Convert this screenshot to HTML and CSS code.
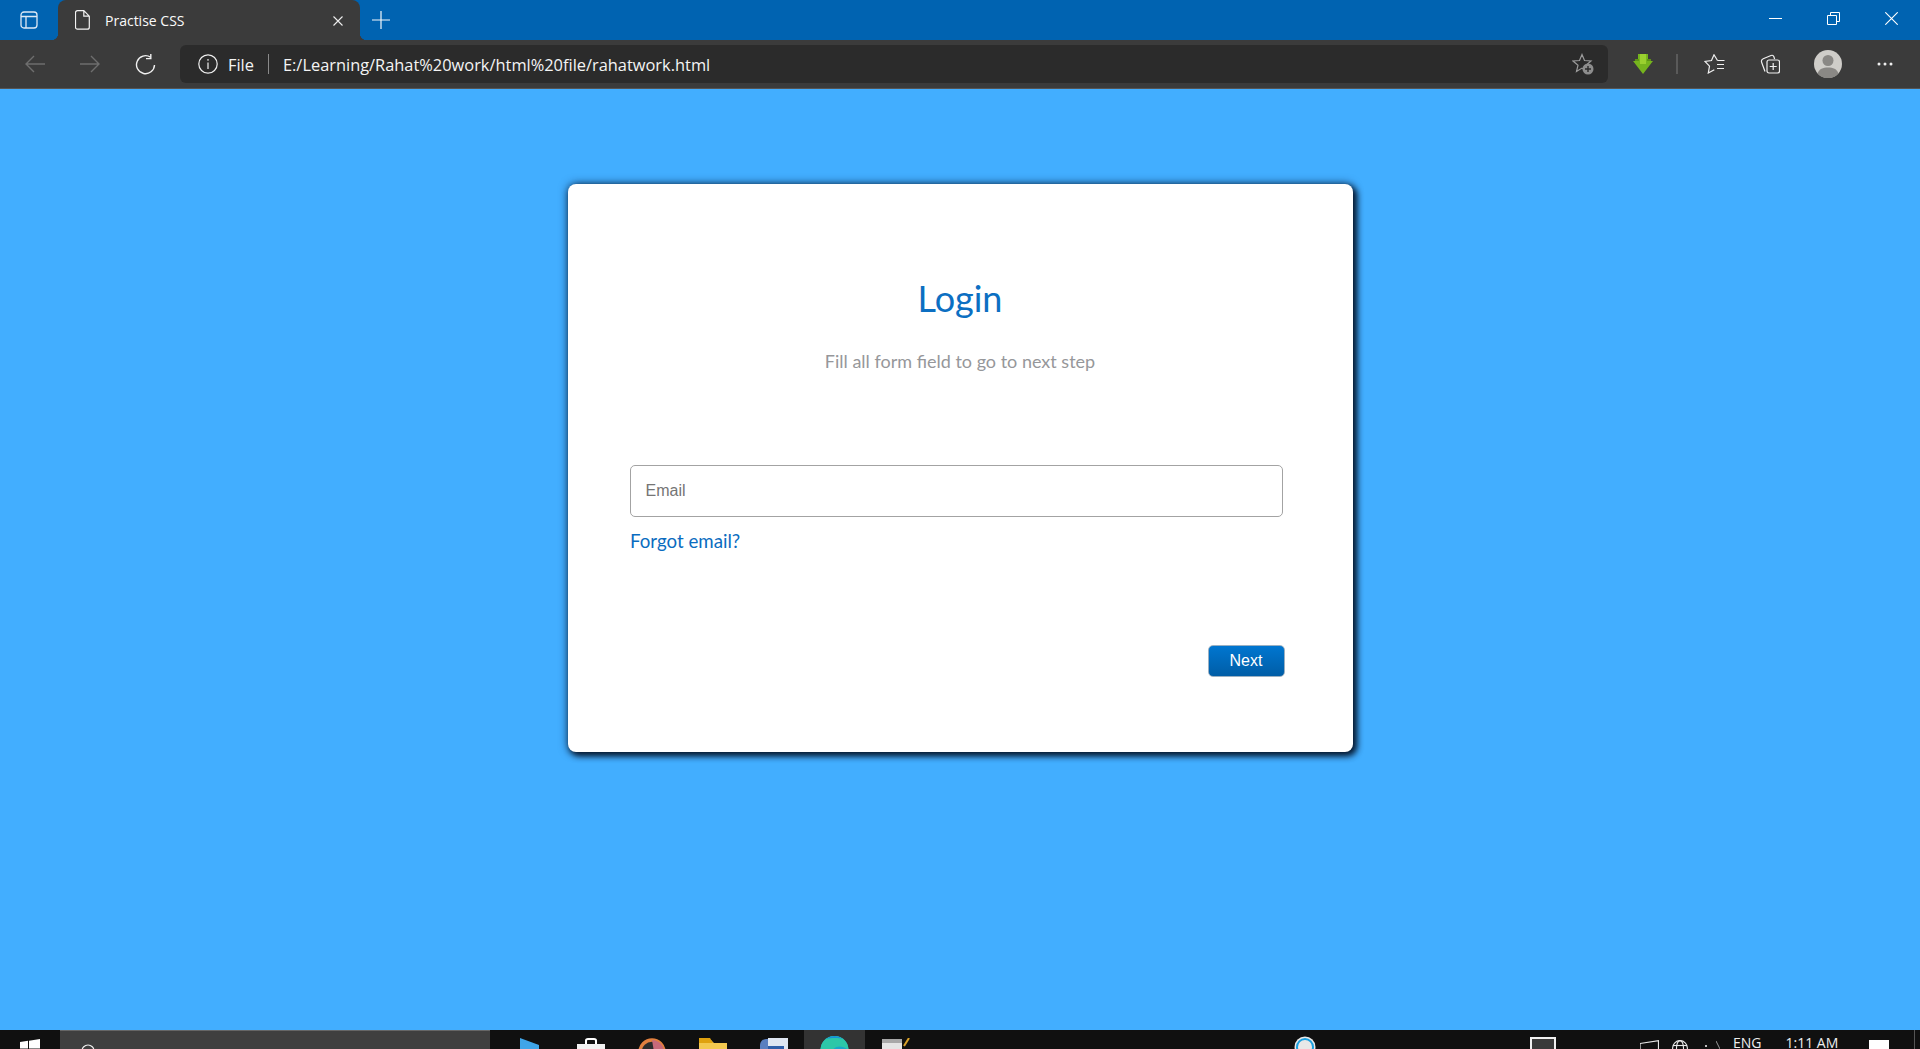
FILE: index.html
```html
<!DOCTYPE html>
<html lang="en">
<head>
  <meta charset="UTF-8" />
  <title>Practise CSS</title>
  <link rel="stylesheet" href="styles.css">
</head>
<body>
  <header class="tabstrip">
    <span class="sidebar-btn">
      <svg width="18" height="18" viewBox="0 0 18 18" fill="none" stroke="#dce9f5" stroke-width="1.3"><rect x="1" y="1" width="16" height="16" rx="3"/><path d="M1 5.500h16M6 5.500V17"/></svg>
    </span>
    <div class="tab">
      <svg width="15" height="20" viewBox="0 0 15 20" fill="none" stroke="#f2f2f2" stroke-width="1.2"><path d="M2.500 .7h6.300l5.500 5.500v11a2 2 0 0 1-2 2h-9.800a2 2 0 0 1-2-2v-14.500a2 2 0 0 1 2-2zM8.800 .7v5.500h5.500"/></svg>
      <span class="tab-title">Practise CSS</span>
      <svg class="tab-close" width="10" height="10" viewBox="0 0 10 10" stroke="#eee" stroke-width="1.1"><path d="M.5.5l9 9M9.500.5l-9 9"/></svg>
    </div>
    <svg class="new-tab" width="18" height="18" viewBox="0 0 18 18" stroke="#f4f8fb" stroke-width="1.2"><path d="M9 0v18M0 9h18"/></svg>
    <div class="window-btns">
      <svg width="13" height="13" viewBox="0 0 13 13" stroke="#fff"><path d="M0 6.500h13"/></svg>
      <svg width="13" height="13" viewBox="0 0 13 13" fill="none" stroke="#fff"><path d="M.5 3.500h9v9h-9zM3.500 3.500v-3h9v9h-3"/></svg>
      <svg width="13" height="13" viewBox="0 0 13 13" stroke="#fff" stroke-width="1.100"><path d="M.3.300l12.400 12.400M12.700.300L.3 12.700"/></svg>
    </div>
  </header>

  <nav class="toolbar">
    <span class="nav-btn">
      <svg width="20" height="18" viewBox="0 0 20 18" fill="none" stroke="#6e6e6e" stroke-width="1.400"><path d="M20 9H1M9 1L1 9l8 8"/></svg>
    </span>
    <span class="nav-btn">
      <svg width="20" height="18" viewBox="0 0 20 18" fill="none" stroke="#6e6e6e" stroke-width="1.400"><path d="M0 9h19M11 1l8 8-8 8"/></svg>
    </span>
    <span class="nav-btn">
      <svg width="21" height="21" viewBox="0 0 21 21" fill="none" stroke="#f0f0f0" stroke-width="1.400"><path d="M15.500 3.200A9 9 0 1 0 19.500 11"/><path d="M15.800 0v4.600h-4.800"/></svg>
    </span>
    <div class="address">
      <svg width="20" height="20" viewBox="0 0 20 20" fill="none" stroke="#eee" stroke-width="1.200"><circle cx="10" cy="10" r="9.200"/><path d="M10 8.500v6.500M10 5v1.800"/></svg>
      <span class="scheme">File</span>
      <span class="addr-sep"></span>
      <span class="url">E:/Learning/Rahat%20work/html%20file/rahatwork.html</span>
      <svg class="star-add" width="22" height="22" viewBox="0 0 22 22" fill="none"><path d="M10 1.500l2.500 6 6.500.500-5 4.200 1.500 6.300-5.500-3.400-5.500 3.400 1.500-6.300-5-4.200 6.500-.500z" stroke="#9a9a9a" stroke-width="1.200"/><circle cx="16" cy="16" r="5.500" fill="#8d8d8d"/><path d="M16 13v6M13 16h6" stroke="#2b2b2b" stroke-width="1.400"/></svg>
    </div>
    <div class="tool-icons">
      <svg class="tool-save" width="20" height="20" viewBox="0 0 20 20"><path d="M5 0h10v7h5L10 20 0 7h5z" fill="#76b41e"/><path d="M7 0h6v10H7z" fill="#9ad02f"/><path d="M2 5h4v2H2zM14 5h4v2h-4z" fill="#5d9415"/></svg>
      <span class="tool-sep"></span>
      <svg class="tool-fav" width="21" height="20" viewBox="0 0 21 20" fill="none" stroke="#f0f0f0" stroke-width="1.200"><path d="M13.500 6.500h7M13 10.500h7M13 14.500h7M13.500 6.500L10 .8 7.500 6.500l-6.500 1 4.500 4.700-1.200 6.800 6-3.300"/></svg>
      <svg class="tool-coll" width="20" height="20" viewBox="0 0 20 20" fill="none" stroke="#f0f0f0" stroke-width="1.200"><path d="M5 17.500L1.700 8.500c-.7-2 .3-3.300 1.500-3.800L11 1.500c1.500-.6 2.500 0 3 1.500l.6 2"/><rect x="7" y="6" width="12.500" height="13" rx="2"/><path d="M13.200 9v7M9.700 12.500h7"/></svg>
      <svg class="tool-avatar" width="28" height="28" viewBox="0 0 28 28"><circle cx="14" cy="14" r="14" fill="#cfcdc9"/><circle cx="14" cy="10.500" r="5.500" fill="#8a8885"/><path d="M3.500 23.500c1.500-4.500 5.500-6 10.500-6s9 1.500 10.500 6a14 14 0 0 1-21 0z" fill="#8a8885"/></svg>
      <svg class="tool-more" width="16" height="4" viewBox="0 0 16 4" fill="#eee"><circle cx="2" cy="2" r="1.500"/><circle cx="8" cy="2" r="1.500"/><circle cx="14" cy="2" r="1.500"/></svg>
    </div>
  </nav>

  <main class="page">
    <form class="card">
      <h1>Login</h1>
      <p class="hint">Fill all form field to go to next step</p>
      <input class="email" type="text" placeholder="Email" />
      <a class="forgot" href="#">Forgot email?</a>
      <div class="actions">
        <button class="next" type="button">Next</button>
      </div>
    </form>
  </main>

  <footer class="taskbar">
    <span class="start">
      <svg width="20" height="20" viewBox="0 0 20 20" fill="#fff"><path d="M0 3l8-1.200v7.700H0zM9 1.700L20 0v9.500H9z"/></svg>
    </span>
    <div class="search">
      <svg width="14" height="14" viewBox="0 0 14 14" fill="none" stroke="#eee" stroke-width="1.200"><circle cx="7" cy="7" r="6"/></svg>
      <span class="search-dot first"></span>
      <span class="search-dot"></span>
    </div>
    <div class="task-icons">
      <span class="task-cell">
        <svg width="19" height="20" viewBox="0 0 19 20"><path d="M0 0l19 7v13H0z" fill="#3fa5e8"/></svg>
      </span>
      <span class="task-cell">
        <svg width="28" height="22" viewBox="0 0 28 22"><path d="M9 6V2.500C9 1 10 1 11 1h6c1 0 2 0 2 1.500V6" fill="none" stroke="#fff" stroke-width="2"/><path d="M0 6h28v16H0z" fill="#f1f1f1"/></svg>
      </span>
      <span class="task-cell">
        <svg width="28" height="28" viewBox="0 0 28 28"><circle cx="14" cy="14" r="12" fill="#2c2c2c" stroke="#e2803f" stroke-width="3.500"/><path d="M14 2a12 12 0 0 1 12 12H16z" fill="#c8697a"/></svg>
      </span>
      <span class="task-cell">
        <svg width="28" height="22" viewBox="0 0 28 22"><path d="M0 2h12l3 3h13v17H0z" fill="#f3c84f"/><path d="M0 0h11l3 5H0z" fill="#dfa10f"/></svg>
      </span>
      <span class="task-cell">
        <svg width="28" height="24" viewBox="0 0 28 24"><rect x="0" y="1" width="24" height="23" rx="6" fill="#5b7fc0"/><rect x="8" y="0" width="20" height="24" fill="#dfe6f2"/><rect x="8" y="8" width="16" height="16" fill="#2f5ea8"/></svg>
      </span>
      <span class="task-cell active">
        <svg width="29" height="28" viewBox="0 0 29 28"><circle cx="14.500" cy="14" r="14" fill="#1aa6c9"/><path d="M.5 14a14 14 0 0 1 28 0c-6-5-14-5-17 2z" fill="#2cc7a8"/><path d="M6 3a14 14 0 0 1 17 0c-5-1.500-12-1-17 0z" fill="#1593d8"/></svg>
      </span>
      <span class="task-cell">
        <svg width="28" height="24" viewBox="0 0 28 24"><path d="M0 1h20l0 23H0z" fill="#e4e4e4"/><path d="M0 1h20v4H0z" fill="#a8a8a8"/><path d="M22 8l5-8" stroke="#d8a028" stroke-width="2"/></svg>
      </span>
    </div>
    <span class="tray-web">
      <svg width="22" height="22" viewBox="0 0 22 22" fill="#1a1a1a"><circle cx="11" cy="11" r="10.500" fill="#e8e8e8"/><circle cx="11" cy="11" r="8" fill="none" stroke="#1aa0e0" stroke-width="2"/></svg>
    </span>
    <div class="tray">
      <svg class="tray-screen" width="26" height="20" viewBox="0 0 26 20" fill="#3a3a3a" stroke="#f0f0f0" stroke-width="2"><rect x="1" y="1" width="24" height="18"/></svg>
      <svg class="tray-sound" width="19" height="12" viewBox="0 0 19 12" fill="none" stroke="#e8e8e8" stroke-width="1.200"><path d="M0 3.500L18.500.7V12M0 3.500V12"/></svg>
      <svg class="tray-globe" width="16" height="16" viewBox="0 0 16 16" fill="none" stroke="#e8e8e8" stroke-width="1.100"><circle cx="8" cy="8" r="7.400"/><ellipse cx="8" cy="8" rx="3.500" ry="7.400"/><path d="M1 5.500h14"/></svg>
      <span class="tray-tick"></span>
      <svg class="tray-chev" width="4" height="8" viewBox="0 0 4 8" fill="none" stroke="#999"><path d="M0 0l4 8"/></svg>
      <span class="lang">ENG</span>
      <span class="clock">1:11 AM</span>
      <span class="notify"></span>
      <span class="show-desktop"></span>
    </div>
  </footer>
</body>
</html>
```

FILE: styles.css
```css
* {
  box-sizing: border-box;
}
html, body {
  height: 100%;
}
body {
  margin: 0;
  display: flex;
  flex-direction: column;
  overflow: hidden;
  background: #42aeff;
  font-family: "Open Sans", sans-serif;
}
svg {
  display: block;
  flex: none;
}

/* tab strip */
.tabstrip {
  height: 40px;
  flex: none;
  display: flex;
  align-items: center;
  background: #0063b1;
  color: #fff;
}
.sidebar-btn {
  width: 58px;
  display: flex;
  justify-content: center;
  padding-right: 1px;
}
.tab {
  position: relative;
  width: 302px;
  height: 40px;
  display: flex;
  align-items: center;
  padding-left: 17px;
  background: #3b3b3b;
  border-radius: 8px 8px 0 0;
}
.tab::before,
.tab::after {
  content: "";
  position: absolute;
  bottom: 0;
  width: 7px;
  height: 7px;
}
.tab::before {
  left: -7px;
  background: radial-gradient(circle at 0 0, transparent 7px, #3b3b3b 7.5px);
}
.tab::after {
  right: -7px;
  background: radial-gradient(circle at 100% 0, transparent 7px, #3b3b3b 7.5px);
}
.tab-title {
  margin-left: 15px;
  font-size: 14px;
  color: #fafafa;
}
.tab-close {
  margin-left: auto;
  margin-right: 17px;
  margin-top: 2px;
}
.new-tab {
  margin-left: 12px;
}
.window-btns {
  margin-left: auto;
  display: flex;
  gap: 45px;
  padding-right: 22px;
  margin-top: -3px;
}

/* address bar row */
.toolbar {
  height: 49px;
  flex: none;
  display: flex;
  align-items: center;
  padding: 1px 0 1px 12px;
  background: #3b3b3b;
  border-bottom: 1px solid #555;
}
.nav-btn {
  width: 46px;
  margin-right: 9px;
  display: flex;
  justify-content: center;
}
.nav-btn:nth-child(3) {
  margin-right: 12px;
}
.address {
  width: 1428px;
  height: 38px;
  display: flex;
  align-items: center;
  padding: 0 12px 0 18px;
  background: #2b2b2b;
  border-radius: 6px;
  color: #f4f4f4;
}
.scheme {
  margin-left: 10px;
  font-size: 16.4px;
}
.addr-sep {
  width: 1px;
  height: 20px;
  margin: 0 14px;
  background: #8a8a8a;
}
.url {
  font-size: 16.4px;
}
.star-add {
  margin-left: auto;
  margin-right: 2px;
}
.tool-icons {
  flex: 1;
  display: flex;
  align-items: center;
  padding-left: 25px;
}
.tool-sep {
  width: 2px;
  height: 20px;
  margin-left: 23px;
  background: #5a5a5a;
}
.tool-fav {
  margin-left: 26px;
}
.tool-coll {
  margin-left: 35px;
}
.tool-avatar {
  margin-left: 34px;
}
.tool-more {
  margin-left: 35px;
}

/* login card */
.page {
  flex: 1;
  display: flex;
  justify-content: center;
  align-items: flex-start;
  padding-top: 95px;
  min-height: 0;
}
.card {
  width: 785px;
  height: 568px;
  padding: 0 70px 0 62px;
  background: #fff;
  border-radius: 8px;
  box-shadow: 0 0 9px 1px rgba(0, 20, 50, 0.55), 3px 3px 6px 1px rgba(0, 10, 25, 0.9);
  font-family: Lato, sans-serif;
}
h1 {
  margin: 93.5px 0 0 -62px;
  width: 785px;
  text-align: center;
  font-size: 36px;
  line-height: 40px;
  font-weight: 400;
  color: #0c6fc2;
}
.hint {
  margin: 33.5px 0 0 -62px;
  width: 785px;
  text-align: center;
  font-size: 18px;
  line-height: 20px;
  color: #96979a;
}
.email {
  display: block;
  width: 100%;
  height: 52px;
  margin-top: 94px;
  padding: 0 15px;
  font-family: "Liberation Sans", sans-serif;
  font-size: 16px;
  background: #fff;
  border: 1px solid #a3a3a3;
  border-radius: 5px;
}
.email::placeholder {
  color: #757575;
}
.forgot {
  display: block;
  margin-top: 14px;
  margin-left: 0.5px;
  font-size: 18.7px;
  line-height: 20px;
  color: #0a6cc0;
  text-decoration: none;
}
.actions {
  display: flex;
  justify-content: flex-end;
  margin-top: 94px;
  margin-right: -2px;
}
.next {
  width: 77px;
  height: 32px;
  padding: 0;
  font-family: "Liberation Sans", sans-serif;
  font-size: 16px;
  color: #fff;
  background: linear-gradient(#0076d0, #005da6);
  border: 1px solid #9ab0c2;
  border-radius: 5px;
}

/* windows taskbar, cut off by the screen edge */
.taskbar {
  height: 19px;
  flex: none;
  display: flex;
  overflow: hidden;
  background: #101010;
  color: #eee;
}
.taskbar > * {
  flex: none;
}
.start {
  width: 60px;
  padding: 9px 0 0 20px;
}
.search {
  width: 430px;
  display: flex;
  padding: 13px 0 0 21px;
  background: #3f3f3f;
  border-top: 1px solid #666;
}
.search-dot {
  width: 2px;
  height: 2px;
  margin: 10px 0 0 105px;
  background: #bbb;
}
.search-dot.first {
  margin-left: 54px;
}
.task-icons {
  display: flex;
  margin-left: 9px;
}
.task-cell {
  width: 61px;
  display: flex;
  justify-content: center;
  padding-top: 8px;
}
.task-cell.active {
  background: #333;
  padding-top: 6px;
}
.tray-web {
  margin-left: 368px;
  padding-top: 6px;
}
.tray {
  margin-left: 214px;
  display: flex;
  align-items: flex-start;
}
.tray-screen {
  margin-top: 7px;
}
.tray-sound {
  margin: 10px 0 0 84px;
}
.tray-globe {
  margin: 10px 0 0 13px;
}
.tray-tick {
  width: 2px;
  height: 2px;
  margin: 15px 0 0 17px;
  background: #bbb;
}
.tray-chev {
  margin: 11px 0 0 9px;
}
.lang,
.clock {
  font-size: 14px;
  line-height: 13px;
  margin-top: 6px;
  white-space: nowrap;
}
.lang {
  margin-left: 13px;
}
.clock {
  margin-left: 24px;
}
.notify {
  width: 20px;
  height: 19px;
  margin: 10px 0 0 31px;
  background: #fff;
}
.show-desktop {
  width: 1px;
  height: 19px;
  margin-left: 25px;
  background: #555;
}
```
